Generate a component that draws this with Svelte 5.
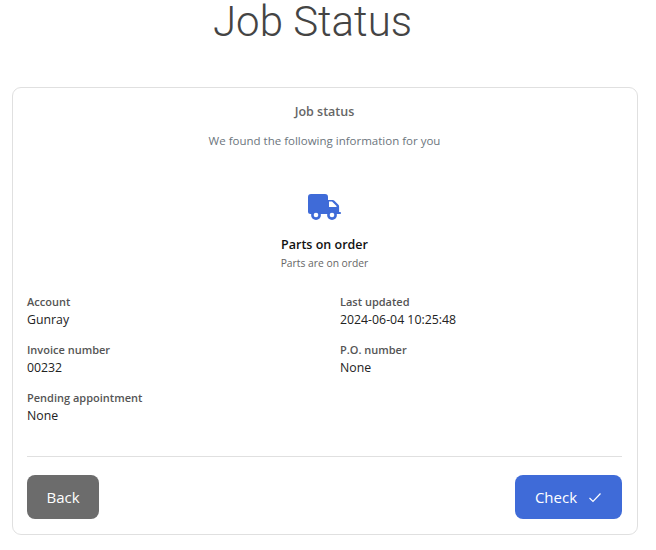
<script>
  const fields = [
    { label: 'Account', value: 'Gunray' },
    { label: 'Last updated', value: '2024-06-04 10:25:48' },
    { label: 'Invoice number', value: '00232' },
    { label: 'P.O. number', value: 'None' },
    { label: 'Pending appointment', value: 'None' }
  ]
</script>

<main class="page">
  <h1>Job Status</h1>

  <section class="card">
    <h2>Job status</h2>
    <p class="lead">We found the following information for you</p>

    <div class="status">
      <svg class="truck" width="33" height="26" viewBox="0 0 33 26" aria-hidden="true">
        <path fill-rule="evenodd" d="M3 0h14a3 3 0 0 1 3 3v3h4.600a2.500 2.500 0 0 1 1.800.7l4 4a2.500 2.500 0 0 1 .7 1.800V18h1a.9.9 0 0 1 0 2H2.500A2.500 2.500 0 0 1 0 17.500V3a3 3 0 0 1 3-3zM21 7.500V13h7.500v-1l-4.500-4.500z" fill="#3f6bd8"/>
        <circle cx="8" cy="21" r="4.900" fill="#3f6bd8"/>
        <circle cx="8" cy="21" r="2.300" fill="#fff"/>
        <circle cx="24" cy="21" r="4.900" fill="#3f6bd8"/>
        <circle cx="24" cy="21" r="2.300" fill="#fff"/>
      </svg>
      <h3>Parts on order</h3>
      <p>Parts are on order</p>
    </div>

    <dl class="fields">
      {#each fields as field}
        <div class="field">
          <dt>{field.label}</dt>
          <dd>{field.value}</dd>
        </div>
      {/each}
    </dl>

    <footer>
      <button class="btn back">Back</button>
      <button class="btn check">
        Check
        <svg width="14" height="11" viewBox="0 0 14 11" aria-hidden="true">
          <path d="M1.500 6l3.500 3.500L12.500 1.500" fill="none" stroke="#fff" stroke-width="1.200"/>
        </svg>
      </button>
    </footer>
  </section>
</main>

<style>
  :global(body) {
    background: #fff;
    font-family: "Open Sans", "Noto Sans", sans-serif;
  }

  .page {
    padding: 0 18px 0 0;
  }

  h1 {
    margin: 0;
    width: 625px;
    height: 87px;
    font-family: Roboto, "Liberation Sans", sans-serif;
    font-size: 42px;
    line-height: 44px;
    font-weight: 300;
    text-align: center;
    color: #444;
  }

  .card {
    margin-left: 12px;
    height: 448px;
    box-sizing: border-box;
    padding: 15px 15px 15px 14px;
    border: 1px solid #e0e0e0;
    border-radius: 9px;
    display: flex;
    flex-direction: column;
  }

  h2 {
    margin: 0;
    font-size: 12.500px;
    line-height: 17px;
    font-weight: 600;
    text-align: center;
    color: #666;
  }

  .lead {
    margin: 12px 0 0;
    font-size: 11.500px;
    line-height: 17px;
    text-align: center;
    color: #6c757d;
  }

  .status {
    margin-top: 45px;
    display: flex;
    flex-direction: column;
    align-items: center;
  }

  .truck {
    display: block;
  }

  h3 {
    margin: 16px 0 0;
    font-size: 12.500px;
    line-height: 18px;
    font-weight: 600;
    color: #111;
  }

  .status p {
    margin: 2px 0 0;
    font-size: 10.300px;
    line-height: 15px;
    color: #666;
  }

  .fields {
    margin: 23px 0 0;
    display: grid;
    grid-template-columns: 313px 1fr;
    row-gap: 14px;
  }

  dt {
    font-size: 11px;
    line-height: 15px;
    font-weight: 600;
    color: #555;
  }

  dd {
    margin: 2px 0 0;
    font-size: 12.300px;
    line-height: 17px;
    color: #222;
  }

  footer {
    margin-top: auto;
    padding-top: 18px;
    border-top: 1px solid #e0e0e0;
    display: flex;
    justify-content: space-between;
  }

  .btn {
    height: 44px;
    border: 0;
    border-radius: 8px;
    color: #fff;
    font-family: inherit;
    font-size: 15px;
    display: flex;
    align-items: center;
    justify-content: center;
  }

  .back {
    width: 72px;
    background: #6c6c6c;
  }

  .check {
    width: 107px;
    gap: 11px;
    background: #3f6bd8;
  }
</style>
